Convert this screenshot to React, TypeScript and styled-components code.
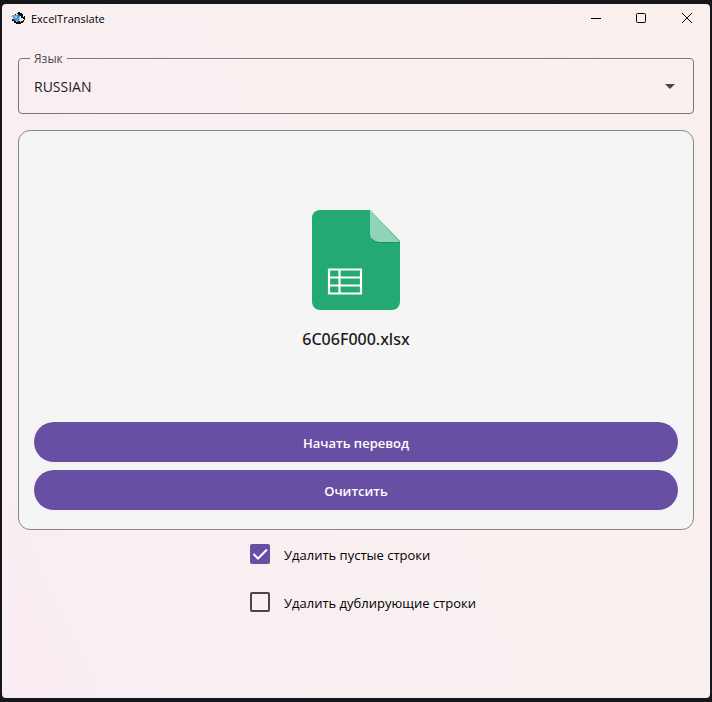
import React, { useState } from "react";
import styled, { createGlobalStyle } from "styled-components";

const GlobalStyle = createGlobalStyle`
  *, *::before, *::after { box-sizing: border-box; }
  body {
    margin: 0;
    background: #15171d;
    font-family: "Open Sans", "Noto Sans", sans-serif;
    color: #1d1b20;
  }
  button, select, input { font: inherit; color: inherit; }
`;

const Desktop = styled.div`
  display: flex;
  min-height: 100vh;
  padding: 4px 2px;
`;

const AppWindow = styled.div`
  flex: 1;
  display: flex;
  flex-direction: column;
  border-radius: 4px;
  background: linear-gradient(65deg, #f9edf3 0%, #f9f0f1 45%, #f9f0ee 100%);
`;

const TitleBar = styled.header`
  display: flex;
  align-items: center;
  height: 30px;
  padding-left: 9px;
`;

const AppTitle = styled.h1`
  flex: 1;
  margin: 0 0 0 6px;
  font-size: 11px;
  line-height: 16px;
  font-weight: 400;
  color: #000;
`;

const WindowButton = styled.button`
  display: grid;
  place-items: center;
  width: 46px;
  height: 30px;
  padding: 0 0 2px;
  border: 0;
  background: transparent;
`;

const Content = styled.main`
  display: flex;
  flex-direction: column;
  padding: 15px 16px;
`;

const OutlinedField = styled.fieldset`
  min-width: 0;
  margin: 0 0 16px;
  padding: 0 15px;
  border: 1px solid #79747e;
  border-radius: 4px;
`;

const FieldLabel = styled.legend`
  margin-left: -4px;
  padding: 2px 4px 0;
  font-size: 12px;
  line-height: 16px;
  color: #49454f;
`;

const SelectBox = styled.div`
  display: grid;
  align-items: center;
  height: 46px;
  padding-bottom: 8px;

  > * { grid-area: 1 / 1; }
  > svg { justify-self: end; margin-right: 3px; pointer-events: none; }
`;

const Select = styled.select`
  width: 100%;
  height: 38px;
  padding: 0;
  border: 0;
  outline: 0;
  appearance: none;
  background: transparent;
  font-size: 14px;
`;

const FileCard = styled.section`
  display: flex;
  flex-direction: column;
  padding: 15px 15px 19px;
  border: 1px solid #878787;
  border-radius: 12px;
  background: #f5f5f5;
`;

const FilePreview = styled.div`
  display: flex;
  flex-direction: column;
  align-items: center;
  gap: 17px;
  padding: 64px 0 71px;
`;

const FileName = styled.span`
  font-family: "Noto Sans", sans-serif;
  font-size: 16px;
  line-height: 24px;
  font-weight: 500;
`;

const Actions = styled.div`
  display: flex;
  flex-direction: column;
  gap: 8px;
`;

const ActionButton = styled.button`
  height: 40px;
  padding: 2px 16px 0;
  border: 0;
  border-radius: 20px;
  background: #6750a4;
  color: #fff;
  font-size: 13px;
  line-height: 20px;
  font-weight: 600;
`;

const Options = styled.div`
  align-self: center;
  display: flex;
  flex-direction: column;
  padding-left: 14px;
`;

const Option = styled.label`
  display: flex;
  align-items: center;
  gap: 14px;
  height: 48px;
  font-size: 13px;
  line-height: 20px;
  color: #000;
`;

const OptionText = styled.span`
  padding-top: 2px;
`;

const Tick = styled.span`
  display: grid;
  > * { grid-area: 1 / 1; }
  > svg { pointer-events: none; }
`;

const TickInput = styled.input`
  width: 20px;
  height: 20px;
  margin: 0;
  appearance: none;
  border: 2px solid #49454f;
  border-radius: 2px;
  &:checked { border-color: #6750a4; background: #6750a4; }
  &:not(:checked) + svg { visibility: hidden; }
`;

function AppLogo() {
  return (
    <svg width="14" height="14" viewBox="0 0 14 14" aria-hidden="true">
      <path d="M4 2h2V1h1V0h2v1h2v1h1v2h2v4h-1v2h-1v1h-2v1H5v-1H3V9H1V7h2V4h1z" fill="#101216" />
      <path d="M0 4h1V3h2v2H0z" fill="#c9ad83" />
      <path d="M2 6V4l1-1h4l2 1v4L8 9H5L3 8z" fill="#4c96dc" />
      <path d="M3 4h3v2H4z" fill="#8bc6f3" />
      <path d="M9 4h1v2h2v1h1v1h-1v1h-2v1H9V9H8z" fill="#e5eef0" />
      <path d="M5 2h2v1H5zM12 4h1v1h-1z" fill="#e5eef0" />
      <path d="M5 9h2v1H5z" fill="#c9ad83" />
    </svg>
  );
}

function SheetIcon() {
  return (
    <svg width="88" height="100" viewBox="0 0 88 100" aria-hidden="true">
      <path d="M8 0h50l30 31v61a8 8 0 0 1-8 8H8a8 8 0 0 1-8-8V8a8 8 0 0 1 8-8z" fill="#23a971" />
      <path d="M58 0v24a8 8 0 0 0 8 8h22z" fill="#90d4b8" />
      <path d="M60 29q2.500 3.500 7 3.500h21" fill="none" stroke="#1c8f60" />
      <path d="M17 59.500h32v24H17zM17 67.500h32M17 75.500h32M27.500 59.500v24" fill="none" stroke="#fff" strokeWidth="2.200" />
    </svg>
  );
}

const languages = ["RUSSIAN", "ENGLISH", "GERMAN", "FRENCH", "CHINESE"];

export default function App() {
  const [language, setLanguage] = useState("RUSSIAN");
  const [dropEmpty, setDropEmpty] = useState(true);
  const [dropDuplicates, setDropDuplicates] = useState(false);

  const options = [
    { label: "Удалить пустые строки", checked: dropEmpty, set: setDropEmpty },
    { label: "Удалить дублирующие строки", checked: dropDuplicates, set: setDropDuplicates },
  ];

  return (
    <>
      <GlobalStyle />
      <Desktop>
        <AppWindow>
          <TitleBar>
            <AppLogo />
            <AppTitle>ExcelTranslate</AppTitle>
            <WindowButton type="button" aria-label="Свернуть">
              <svg width="12" height="11" viewBox="0 0 12 11" stroke="#000"><path d="M2 5.500h10" /></svg>
            </WindowButton>
            <WindowButton type="button" aria-label="Развернуть">
              <svg width="10" height="10" viewBox="0 0 10 10" stroke="#000" fill="none"><rect x=".5" y=".5" width="9" height="9" rx="1" /></svg>
            </WindowButton>
            <WindowButton type="button" aria-label="Закрыть">
              <svg width="10" height="10" viewBox="0 0 10 10" stroke="#000"><path d="m0 0 10 10M10 0 0 10" /></svg>
            </WindowButton>
          </TitleBar>
          <Content>
            <OutlinedField>
              <FieldLabel><label htmlFor="language">Язык</label></FieldLabel>
              <SelectBox>
                <Select id="language" value={language} onChange={(e) => setLanguage(e.target.value)}>
                  {languages.map((name) => <option key={name}>{name}</option>)}
                </Select>
                <svg width="10" height="5" viewBox="0 0 10 5" aria-hidden="true"><path d="M0 0h10L5 5z" fill="#49454f" /></svg>
              </SelectBox>
            </OutlinedField>
            <FileCard>
              <FilePreview>
                <SheetIcon />
                <FileName>6C06F000.xlsx</FileName>
              </FilePreview>
              <Actions>
                <ActionButton type="button">Начать перевод</ActionButton>
                <ActionButton type="button">Очитсить</ActionButton>
              </Actions>
            </FileCard>
            <Options>
              {options.map((o) => (
                <Option key={o.label}>
                  <Tick>
                    <TickInput type="checkbox" checked={o.checked} onChange={(e) => o.set(e.target.checked)} />
                    <svg width="20" height="20" viewBox="0 0 20 20" fill="none" stroke="#fff" strokeWidth="2" aria-hidden="true">
                      <path d="m3.500 10 4.500 4.500L17 5.500" />
                    </svg>
                  </Tick>
                  <OptionText>{o.label}</OptionText>
                </Option>
              ))}
            </Options>
          </Content>
        </AppWindow>
      </Desktop>
    </>
  );
}
